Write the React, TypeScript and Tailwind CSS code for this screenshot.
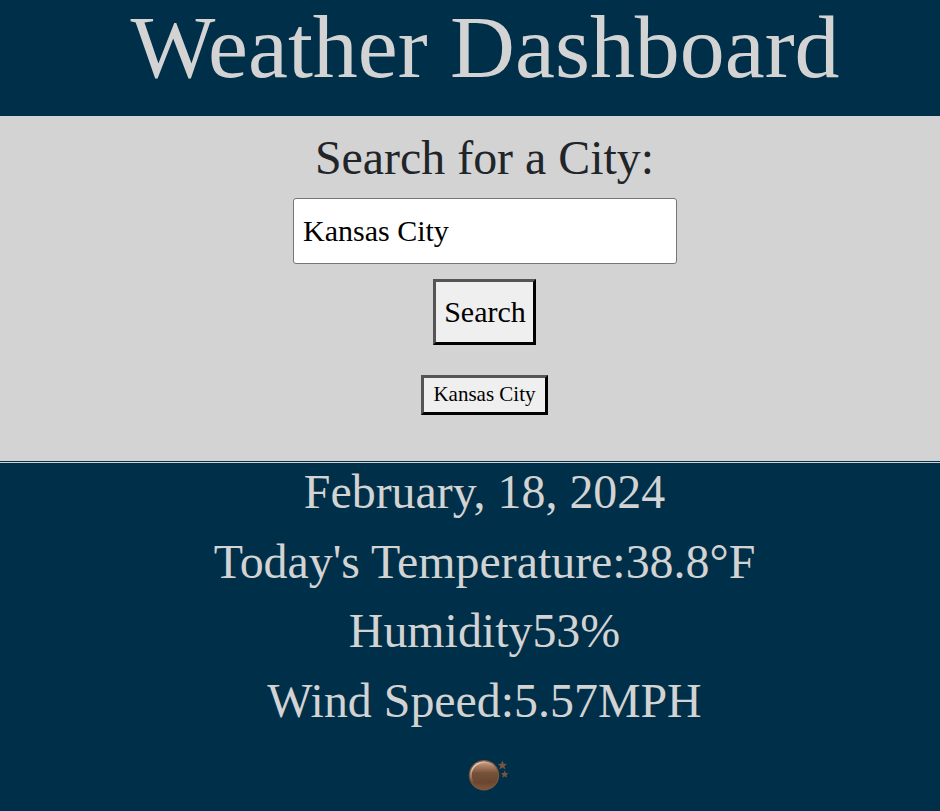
export default function App() {
  return (
    <main className="h-[811px] w-[940px] overflow-hidden bg-[#003049] text-center font-['Liberation_Serif',serif] text-[#d3d3d3]">
      <header className="h-[116px] pl-[30px]">
        <h1 className="text-[89.9px] leading-[94px]">Weather Dashboard</h1>
      </header>
      <section className="flex h-[345px] flex-col items-center bg-[#d3d3d3] pl-[29px] text-[#212529]">
        <h2 className="mt-[14px] text-[47.9px] leading-[56px]">Search for a City:</h2>
        <input className="mt-[12px] ml-px h-[66px] w-[384px] rounded-[3px] border border-[#767676] bg-white px-[9px] text-[30px] text-black" defaultValue="Kansas City" />
        <button className="mt-[15px] mr-px h-[66px] w-[103px] border-[3px] border-t-[#555] border-r-black border-b-black border-l-[#555] bg-[#efefef] pb-[2px] pl-[2px] text-[30px] text-black">Search</button>
        <button className="mt-[30px] mr-px h-[40px] w-[127px] border-[3px] border-t-[#555] border-r-black border-b-black border-l-[#555] bg-[#efefef] pl-px text-[21px] text-black">Kansas City</button>
      </section>
      <div className="mt-px h-px bg-[#d3d3d3]" />
      <section className="pl-[29px] text-[47.9px] leading-[57.6px]">
        <p>February, 18, 2024</p>
        <p className="mt-[12px]">Today's Temperature:38.8°F</p>
        <p className="mt-[12px]">Humidity53%</p>
        <p className="mt-[12px]">Wind Speed:5.57MPH</p>
        <div className="flex justify-center pt-[26px] pl-[7px]">
          <svg className="h-[40px] w-[48px]" viewBox="464 755 48 40">
            <defs>
              <linearGradient id="moon" x1="0" y1="0" x2="0" y2="1">
                <stop offset="0" stopColor="#c9a48e" />
                <stop offset=".2" stopColor="#a77a60" />
                <stop offset=".42" stopColor="#76513a" />
                <stop offset=".75" stopColor="#694630" />
                <stop offset="1" stopColor="#80573e" />
              </linearGradient>
              <linearGradient id="shine" x1=".15" y1="0" x2=".8" y2=".7">
                <stop offset="0" stopColor="#f4e3d8" />
                <stop offset=".6" stopColor="#c99a7e" stopOpacity="0" />
              </linearGradient>
            </defs>
            <circle cx="484" cy="775.2" r="15.2" fill="#7d543c" />
            <circle cx="484" cy="775.2" r="14" fill="url(#moon)" />
            <circle cx="484" cy="775.2" r="13" fill="none" stroke="url(#shine)" strokeWidth="1.6" />
            <path fill="#76553f" d="m502.4 760.5 1.3 3.2 3.4.2-2.6 2.2.8 3.3-2.9-1.8-2.9 1.8.8-3.3-2.6-2.2 3.4-.2zM504.7 770.5l1.1 2.5 2.7.2-2 1.8.6 2.7-2.4-1.4-2.4 1.4.6-2.7-2-1.8 2.7-.2z" />
          </svg>
        </div>
      </section>
    </main>
  );
}
